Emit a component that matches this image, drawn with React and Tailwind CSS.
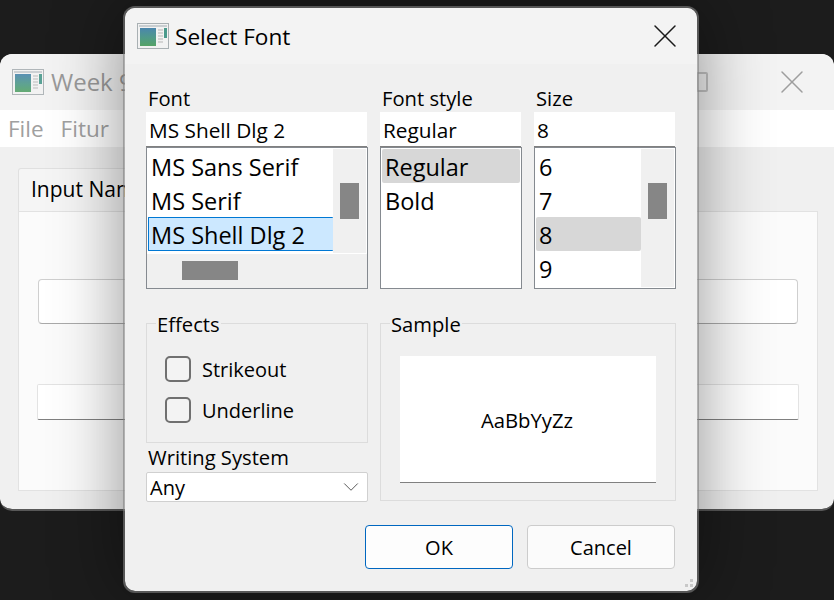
import { X, ChevronDown } from "lucide-react";

const FONT = "font-['Open_Sans','Liberation_Sans',sans-serif]";

function AppIcon({ className }) {
  return (
    <svg viewBox="0 0 32 26" className={className}>
      <defs>
        <linearGradient id="pane" x1="0" y1="0" x2="0" y2="1">
          <stop offset="0" stopColor="#4a86ad" />
          <stop offset="0.55" stopColor="#4f9a88" />
          <stop offset="1" stopColor="#55a366" />
        </linearGradient>
      </defs>
      <rect x="0.5" y="0.5" width="31" height="25" fill="#f2f2f2" stroke="#a9b0b3" />
      <rect x="2" y="2" width="28" height="2" fill="#c9ced1" />
      <rect x="3" y="5" width="16" height="18" fill="url(#pane)" />
      <path d="M21 7h5M21 10h5M21 13h5M21 16h5M21 19h5" stroke="#b5b5b5" strokeWidth="1" />
      <rect x="27" y="5" width="3" height="10" fill="#4a9a8c" />
    </svg>
  );
}

function Field({ value }) {
  return (
    <div className="h-[35px] mr-[1px] bg-white border-b border-b-[#808080] pl-[3px] text-[20.8px] leading-[37px] text-black">
      {value}
    </div>
  );
}

function Row({ text, state }) {
  let cls = "px-[3px] leading-[36px]";
  if (state === "current") cls = "pl-[2px] bg-[#cce8ff] border border-r-0 border-[#0078d4] rounded-[1px] leading-[34px]";
  if (state === "grey") cls = "px-[3px] leading-[36px] bg-[#d7d7d7] rounded-[2px]";
  return (
    <div className={`h-[34px] text-[23.5px] whitespace-nowrap overflow-hidden ${cls}`}>
      {text}
    </div>
  );
}

function VBar() {
  return (
    <div className="w-[33px] shrink-0 bg-[#f0f0f0] pt-[34px] flex justify-center">
      <div className="w-[19px] h-[36px] bg-[#868686]" />
    </div>
  );
}

function ListBox({ rows, scroll, hbar }) {
  return (
    <div className="h-[142px] border border-[#858a90] bg-white flex flex-col text-black overflow-hidden">
      <div className="flex min-h-0 flex-1 p-[1px]">
        <div className="flex-1 min-w-0">
          {rows.map((r) => (
            <Row key={r.text} text={r.text} state={r.state} />
          ))}
        </div>
        {scroll && <VBar />}
      </div>
      {hbar && (
        <div className="h-[34px] shrink-0 bg-[#f0f0f0] pl-[35px] pt-[7px]">
          <div className="w-[56px] h-[19px] bg-[#868686]" />
        </div>
      )}
    </div>
  );
}

function Group({ title, className, children }) {
  return (
    <div className={`relative border border-[#dcdcdc] ${className}`}>
      <span className="absolute left-[9px] -top-[14px] bg-[#f0f0f0] px-[1px] text-[20.2px] leading-[28px] text-black">
        {title}
      </span>
      {children}
    </div>
  );
}

function Check({ label }) {
  return (
    <div className="flex items-center gap-[11px] h-[26px]">
      <div className="w-[26px] h-[26px] rounded-[5px] border-2 border-[#707070] bg-[#f3f3f3]" />
      <span className="pt-[2px] text-[20px] text-black">{label}</span>
    </div>
  );
}

function BackWindow() {
  return (
    <div className="absolute left-0 top-[54px] w-[834px] h-[457px] rounded-[12px] border-b-2 border-[rgba(128,128,128,0.6)] bg-[#f0f0f0] bg-clip-padding overflow-hidden flex flex-col">
      <div className="h-[56px] shrink-0 bg-[#f3f3f3] flex items-center pl-[12px] pr-[22px]">
        <AppIcon className="w-[32px] h-[26px] opacity-90" />
        <span className="ml-[7px] text-[24px] text-[#9a9a9a]">Week 9</span>
        <div className="ml-auto mr-[64px] w-[12px] h-[20px] rounded-[2px] border-2 border-[#c4c4c4]" />
        <X className="w-[40px] h-[40px] text-[#9e9e9e]" strokeWidth={0.9} />
      </div>
      <div className="h-[37px] shrink-0 bg-white flex items-center gap-[17px] pl-[8px] text-[22.5px] text-[#a0a0a0]">
        <span>File</span>
        <span>Fitur</span>
      </div>
      <div className="flex-1 pl-[18px] pr-[16px] pt-[21px] pb-[18px] flex flex-col">
        <div className="h-[43px] w-[160px] shrink-0 bg-[#f5f5f5] border border-b-0 border-[#e0e0e0] rounded-t-[3px] pl-[12px] text-[21px] leading-[40px] text-black">
          Input Nama
        </div>
        <div className="flex-1 bg-[#fbfbfb] border border-[#e2e2e2] px-[19px] pt-[67px]">
          <div className="h-[45px] bg-white border border-[#cfcfcf] border-b-[#aaaaaa] rounded-[4px]" />
          <div className="mt-[60px] -mx-[1px] h-[36px] bg-white border border-[#e3e3e3] border-b-[#808080] rounded-[2px]" />
        </div>
      </div>
    </div>
  );
}

function Dialog() {
  return (
    <div className="absolute left-[123px] top-[6px] w-[576px] h-[587px] rounded-[12px] border-2 border-[rgba(128,128,128,0.6)] bg-[#f0f0f0] bg-clip-padding shadow-[0_0_70px_rgba(0,0,0,0.42)] overflow-hidden flex flex-col text-black">
      <div className="h-[56px] shrink-0 bg-[#f3f3f3] flex items-center pl-[12px] pr-[12px]">
        <AppIcon className="w-[32px] h-[26px]" />
        <span className="ml-[6px] pt-[2px] text-[22.6px]">Select Font</span>
        <X className="ml-auto w-[40px] h-[40px] text-[#1a1a1a]" strokeWidth={0.9} />
      </div>

      <div className="flex-1 px-[21px] pt-[20px] relative">
        <div className="grid grid-cols-[222px_142px_142px] gap-x-[12px]">
          <div>
            <div className="h-[28px] pl-[2px] text-[20.2px] leading-[28px]">Font</div>
            <Field value="MS Shell Dlg 2" />
            <ListBox
              scroll
              hbar
              rows={[
                { text: "MS Sans Serif" },
                { text: "MS Serif" },
                { text: "MS Shell Dlg 2", state: "current" },
              ]}
            />
          </div>
          <div>
            <div className="h-[28px] pl-[2px] text-[20.2px] leading-[28px]">Font style</div>
            <Field value="Regular" />
            <ListBox rows={[{ text: "Regular", state: "grey" }, { text: "Bold" }]} />
          </div>
          <div>
            <div className="h-[28px] pl-[2px] text-[20.2px] leading-[28px]">Size</div>
            <Field value="8" />
            <ListBox
              scroll
              rows={[{ text: "6" }, { text: "7" }, { text: "8", state: "grey" }, { text: "9" }]}
            />
          </div>
        </div>

        <div className="mt-[34px] grid grid-cols-[222px_296px] gap-x-[12px]">
          <div>
            <Group title="Effects" className="h-[120px] pl-[18px] pt-[32px] flex flex-col gap-[15px]">
              <Check label="Strikeout" />
              <Check label="Underline" />
            </Group>
            <div className="h-[29px] pl-[2px] text-[20.2px] leading-[28px]">Writing System</div>
            <div className="h-[30px] bg-white border border-[#d0d0d0] rounded-[2px] flex items-center pl-[3px] pr-[3px] text-[20px]">
              <span className="pt-[2px]">Any</span>
              <ChevronDown className="ml-auto w-[26px] h-[26px] text-[#555555]" strokeWidth={0.9} />
            </div>
          </div>
          <Group title="Sample" className="h-[178px] px-[19px] pt-[32px]">
            <div className="h-[127px] bg-white border-b border-b-[#808080] flex items-center justify-center pt-[3px] pr-[2px] text-[20.3px]">
              AaBbYyZz
            </div>
          </Group>
        </div>

        <div className="mt-[23px] flex justify-end gap-[14px] pr-[1px]">
          <button className="w-[148px] h-[44px] pt-[2px] rounded-[4px] bg-[#fdfdfd] border border-[#0067c0] text-[20px]">OK</button>
          <button className="w-[148px] h-[44px] pt-[2px] rounded-[4px] bg-[#fbfbfb] border border-[#cccccc] text-[20px]">Cancel</button>
        </div>

        {/* size grip */}
        <div className="absolute right-[4px] bottom-[4px] grid grid-cols-2 gap-[2px]">
          <span className="w-[3px] h-[3px]" />
          <span className="w-[3px] h-[3px] bg-[#c8c8c8]" />
          <span className="w-[3px] h-[3px] bg-[#c8c8c8]" />
          <span className="w-[3px] h-[3px] bg-[#c8c8c8]" />
        </div>
      </div>
    </div>
  );
}

export default function App() {
  return (
    <div className={`relative w-[834px] h-[600px] overflow-hidden bg-[#1c1c1c] ${FONT}`}>
      <BackWindow />
      <Dialog />
    </div>
  );
}
